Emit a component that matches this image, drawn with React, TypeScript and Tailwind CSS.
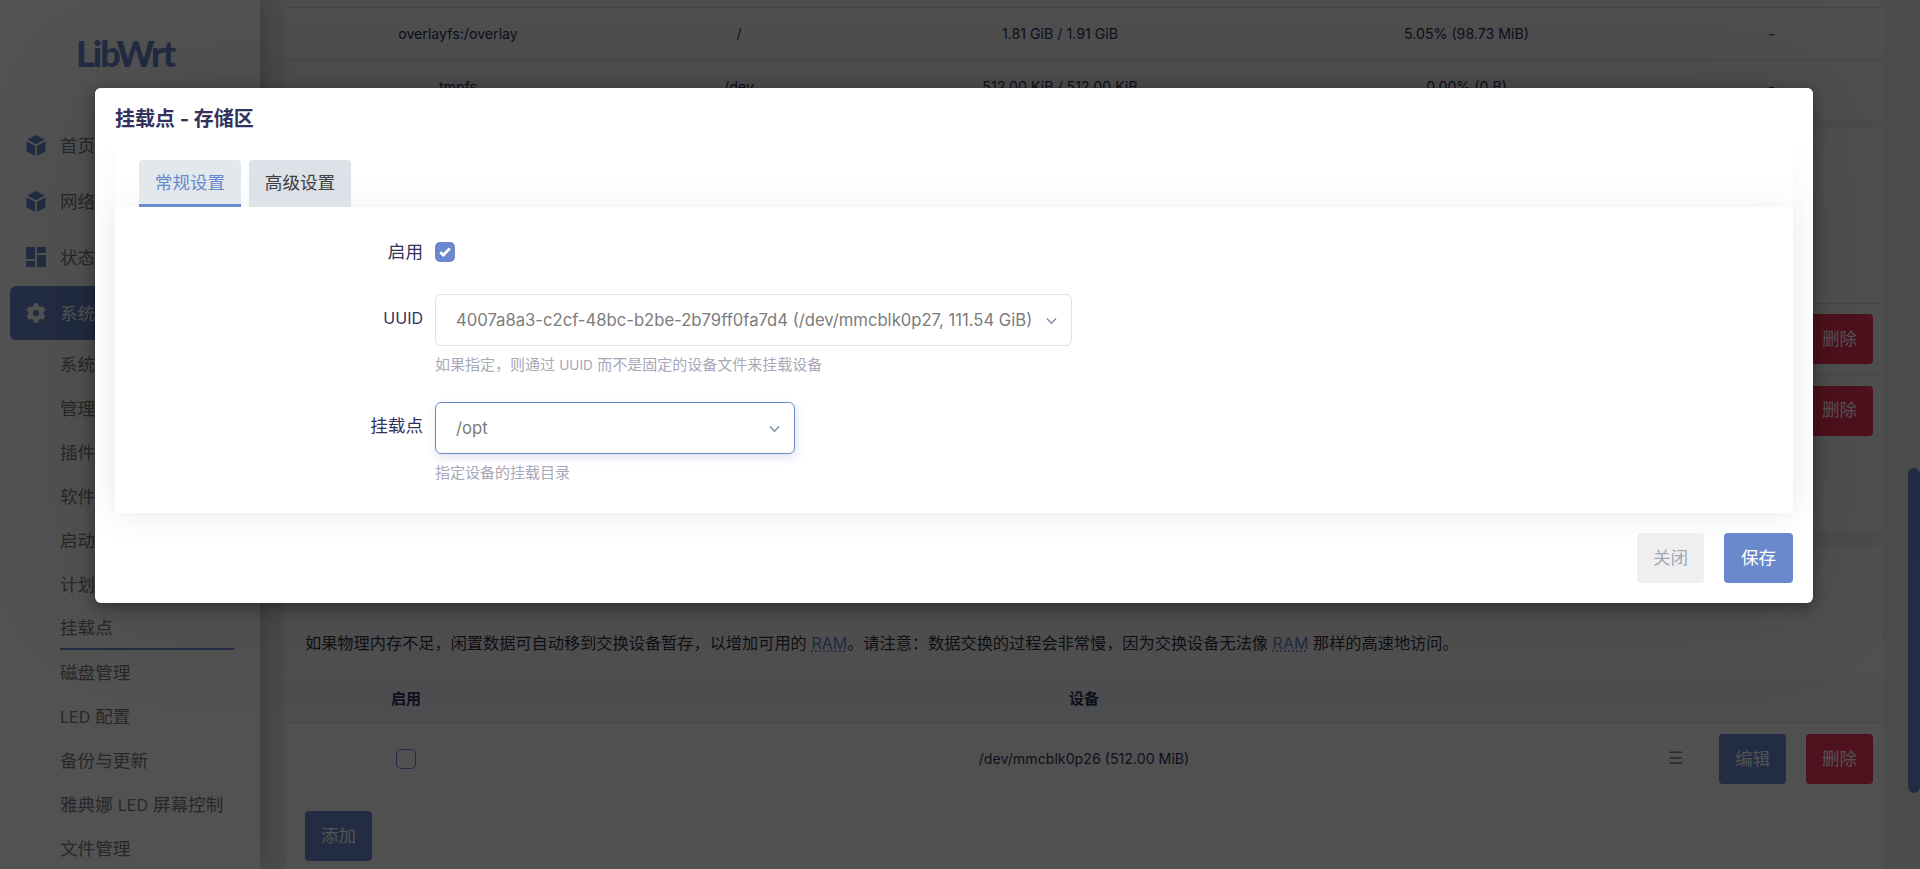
import { FaCog } from 'react-icons/fa'

const Led = () => <span className="text-[16px]">LED</span>

const subMenu: { name: string; label: React.ReactNode }[] = [
  { name: 'system', label: '系统' },
  { name: 'admin', label: '管理权' },
  { name: 'plugin', label: '插件' },
  { name: 'software', label: '软件包' },
  { name: 'startup', label: '启动项' },
  { name: 'cron', label: '计划任务' },
  { name: 'mount', label: '挂载点' },
  { name: 'disk', label: '磁盘管理' },
  { name: 'led', label: <><Led /> 配置</> },
  { name: 'backup', label: '备份与更新' },
  { name: 'athena', label: <>雅典娜 <Led /> 屏幕控制</> },
  { name: 'files', label: '文件管理' },
]

const CubeIcon = () => (
  <svg viewBox="0 0 20 22" className="w-5 h-[21px] fill-[#6a89cc]">
    <polygon points="10,0 19,4.8 10,9.6 1,4.8" />
    <polygon points="0,6.6 9,11.4 9,22 0,17.2" />
    <polygon points="20,6.6 11,11.4 11,22 20,17.2" />
  </svg>
)

const DashIcon = () => (
  <svg viewBox="0 0 20 20" className="w-5 h-5 fill-[#6a89cc]">
    <rect x="0" y="0" width="9" height="12" />
    <rect x="0" y="14" width="9" height="6" />
    <rect x="11" y="0" width="9" height="6" />
    <rect x="11" y="8" width="9" height="12" />
  </svg>
)

const Chevron = () => (
  <svg viewBox="0 0 12 8" className="w-[11px] h-2 mt-[2px] fill-none stroke-[#7a8aa0] stroke-[1.4]">
    <polyline points="1,1.2 6,6.4 11,1.2" />
  </svg>
)

const TopItem = ({ icon, label, active }: { icon: React.ReactNode; label: string; active?: boolean }) => (
  <div className={`flex items-center h-[54px] mb-[2px] ml-[10px] mr-[10px] pl-4 gap-[14px] rounded-[6px] ${active ? 'bg-[#6a89cc] text-white' : 'text-[#7c7c7c]'}`}>
    {icon}
    <span className="pt-[2px]">{label}</span>
  </div>
)

const App = () => {
  return (
    <div className="relative flex h-[869px] overflow-hidden bg-[#ebebeb] text-[17.6px] text-[#7c7c7c] font-['Inter','Noto_Sans_CJK_SC',sans-serif]">
      {/* sidebar */}
      <aside className="w-[260px] shrink-0 bg-white shadow-[0_0_28px_rgba(0,0,0,0.25)] z-10">
        <div className="h-[118px] flex pl-[76px] pt-[31px]">
          <div className="text-[36px] leading-[45px] font-black tracking-[-2px] text-[#6a89cc] font-['Lato',sans-serif]">LibWrt</div>
        </div>
        <TopItem icon={<CubeIcon />} label="首页" />
        <TopItem icon={<CubeIcon />} label="网络" />
        <TopItem icon={<DashIcon />} label="状态" />
        <TopItem icon={<FaCog className="w-5 h-5" />} label="系统" active />
        <div className="mt-[2px]">
          {subMenu.map((item) => (
            <div key={item.name} className="h-[44px] ml-[60px] mr-[26px] flex items-center">
              <span className={`w-full h-full pt-[2px] flex items-center ${item.name === 'mount' ? 'border-b-2 border-[#6a89cc]' : ''}`}>
                <span className="whitespace-pre">{item.label}</span>
              </span>
            </div>
          ))}
        </div>
      </aside>

      {/* page behind the dialog */}
      <main className="flex-1 pl-[25px] pr-[37px] text-[14.2px] text-[#32325d]">
        <div className="bg-[#f4f4f4]">
          <div className="h-2 border-b border-[#d8d8d8]" />
          <div className="grid grid-cols-[346px_216px_426px_387px_1fr] h-[53px] items-center text-center border-b border-[#d8d8d8]">
            <div>overlayfs:/overlay</div>
            <div>/</div>
            <div>1.81 GiB / 1.91 GiB</div>
            <div>5.05% (98.73 MiB)</div>
            <div>-</div>
          </div>
          <div className="grid grid-cols-[346px_216px_426px_387px_1fr] h-[59px] pb-[7px] items-center text-center">
            <div>tmpfs</div>
            <div>/dev</div>
            <div>512.00 KiB / 512.00 KiB</div>
            <div>0.00% (0 B)</div>
            <div>-</div>
          </div>
        </div>

        <div className="mt-[9px] h-[402px] bg-[#f8f8f8] rounded-[4px] text-[17.6px]">
          <div className="h-[128px]" />
          <div className="h-[47px] bg-[#f4f7fa] border-b border-[#d8d8d8]" />
          <div className="h-[71px] border-b border-[#d8d8d8] flex items-center justify-end pr-[10px] gap-5">
            <button className="w-[67px] h-[50px] rounded-[4px] bg-[#f5365c] text-white">删除</button>
          </div>
          <div className="h-[71px] flex items-center justify-end pr-[10px] gap-5">
            <button className="w-[67px] h-[50px] rounded-[4px] bg-[#f5365c] text-white">删除</button>
          </div>
        </div>

        <div className="mt-4 bg-[#f8f8f8] rounded-[4px] pt-[84px] h-[340px]">
          <p className="pl-5 text-[16.2px] leading-6 text-[#333344]">
            如果物理内存不足，闲置数据可自动移到交换设备暂存，以增加可用的{' '}
            <abbr className="text-[#6a89cc] text-[16px] underline decoration-dotted underline-offset-2">RAM</abbr>
            。请注意：数据交换的过程会非常慢，因为交换设备无法像{' '}
            <abbr className="text-[#6a89cc] text-[16px] underline decoration-dotted underline-offset-2">RAM</abbr> 那样的高速地访问。
          </p>
          <div className="mt-[21px] grid grid-cols-[242px_1114px_1fr] h-[47px] items-center text-center bg-[#eff2f5] border-b border-[#d8d8d8] font-bold text-[15px]">
            <div>启用</div>
            <div>设备</div>
            <div />
          </div>
          <div className="grid grid-cols-[242px_1114px_1fr] h-[72px] items-center text-center">
            <div className="flex justify-center">
              <span className="w-5 h-5 rounded-[5px] border border-[#6a89cc] bg-transparent" />
            </div>
            <div>/dev/mmcblk0p26 (512.00 MiB)</div>
            <div className="flex items-center justify-end pr-[10px] gap-[20px]">
              <span className="w-[47px] h-[50px] flex items-center justify-center rounded-[4px] bg-[#fbfbfb] text-[#8a8fa0] font-['DejaVu_Sans',sans-serif] text-[17px]">☰</span>
              <button className="w-[67px] h-[50px] rounded-[4px] bg-[#6a89cc] text-white text-[17.6px]">编辑</button>
              <button className="w-[67px] h-[50px] rounded-[4px] bg-[#f5365c] text-white text-[17.6px]">删除</button>
            </div>
          </div>
          <button className="ml-5 mt-[16px] w-[67px] h-[50px] rounded-[4px] bg-[#6a89cc] text-white text-[17.6px]">添加</button>
        </div>
      </main>

      {/* scrollbar */}
      <div className="absolute right-0 top-[468px] w-3 h-[325px] rounded-[6px] bg-[#6a89cc]" />

      {/* dialog */}
      <div className="absolute inset-0 z-20 bg-[rgba(0,0,0,0.68)] pl-[95px] pt-[88px]">
        <div className="w-[1718px] h-[515px] bg-white rounded-[6px] shadow-[0_4px_16px_rgba(0,0,0,0.4),0_0_120px_rgba(0,0,0,0.12)] overflow-hidden">
          <div className="relative z-10 h-[62px] bg-white flex items-center pl-5 text-[20px] font-bold text-[#32325d]">
            挂载点 - 存储区
          </div>
          <div className="mx-5 h-[363px] pt-[10px] shadow-[0_0_32px_rgba(136,152,170,0.08)]">
            <div className="flex pl-6 gap-2 h-[47px] text-[17.6px]">
              <div className="w-[102px] h-[47px] pt-[2px] rounded-t-[4px] bg-[#e3e8ed] border-b-[3px] border-[#6a89cc] text-[#6a89cc] flex items-center justify-center">常规设置</div>
              <div className="w-[102px] h-[47px] rounded-t-[4px] bg-[#dce2e8] text-[#404040] flex items-center justify-center">高级设置</div>
            </div>
            <div className="h-[306px] pt-[35px] bg-white rounded-[4px] shadow-[0_0_32px_rgba(136,152,170,0.15)] text-[#32325d]">
              <div className="grid grid-cols-[308px_1fr] gap-x-3 items-center h-5 leading-5">
                <div className="text-right">启用</div>
                <div className="w-5 h-5 rounded-[5px] bg-[#6a89cc] flex items-center justify-center">
                  <svg viewBox="0 0 12 10" className="w-3 h-[10px] fill-none stroke-white stroke-[2.8]">
                    <polyline points="1.2,5.2 4.4,8 10.8,1.4" />
                  </svg>
                </div>
              </div>

              <div className="mt-8 grid grid-cols-[308px_1fr] gap-x-3">
                <div className="text-right h-[52px] flex items-center justify-end pb-[4px] text-[16px]">UUID</div>
                <div>
                  <div className="w-[637px] h-[52px] pl-5 pr-[14px] flex items-center justify-between rounded-[6px] border border-[#dee2e6] text-[16.65px] text-[#7c7c7c]">
                    <span>4007a8a3-c2cf-48bc-b2be-2b79ff0fa7d4 (/dev/mmcblk0p27, 111.54 GiB)</span>
                    <Chevron />
                  </div>
                  <div className="mt-2 leading-[22px] text-[15px] text-[#a8a8b8]">
                    如果指定，则通过 <span className="text-[13.6px]">UUID</span> 而不是固定的设备文件来挂载设备
                  </div>
                </div>
              </div>

              <div className="mt-[26px] grid grid-cols-[308px_1fr] gap-x-3">
                <div className="text-right h-[52px] flex items-center justify-end pb-[3px]">挂载点</div>
                <div>
                  <div className="w-[360px] h-[52px] pl-5 pr-[14px] flex items-center justify-between rounded-[6px] border border-[#6a89cc] shadow-[0_3px_9px_rgba(50,50,93,0.08),3px_4px_8px_rgba(94,114,228,0.1)] text-[16.65px] text-[#7c7c7c]">
                    <span>/opt</span>
                    <Chevron />
                  </div>
                  <div className="mt-2 leading-[22px] text-[15px] text-[#a8a8b8]">指定设备的挂载目录</div>
                </div>
              </div>
            </div>
          </div>
          <div className="flex justify-end gap-5 pr-5 pt-5 text-[17.6px]">
            <button className="w-[67px] h-[50px] rounded-[4px] bg-[#efefef] text-[#a0a8b4]">关闭</button>
            <button className="w-[69px] h-[50px] rounded-[4px] bg-[#6a89cc] text-white">保存</button>
          </div>
        </div>
      </div>
    </div>
  )
}

export default App
